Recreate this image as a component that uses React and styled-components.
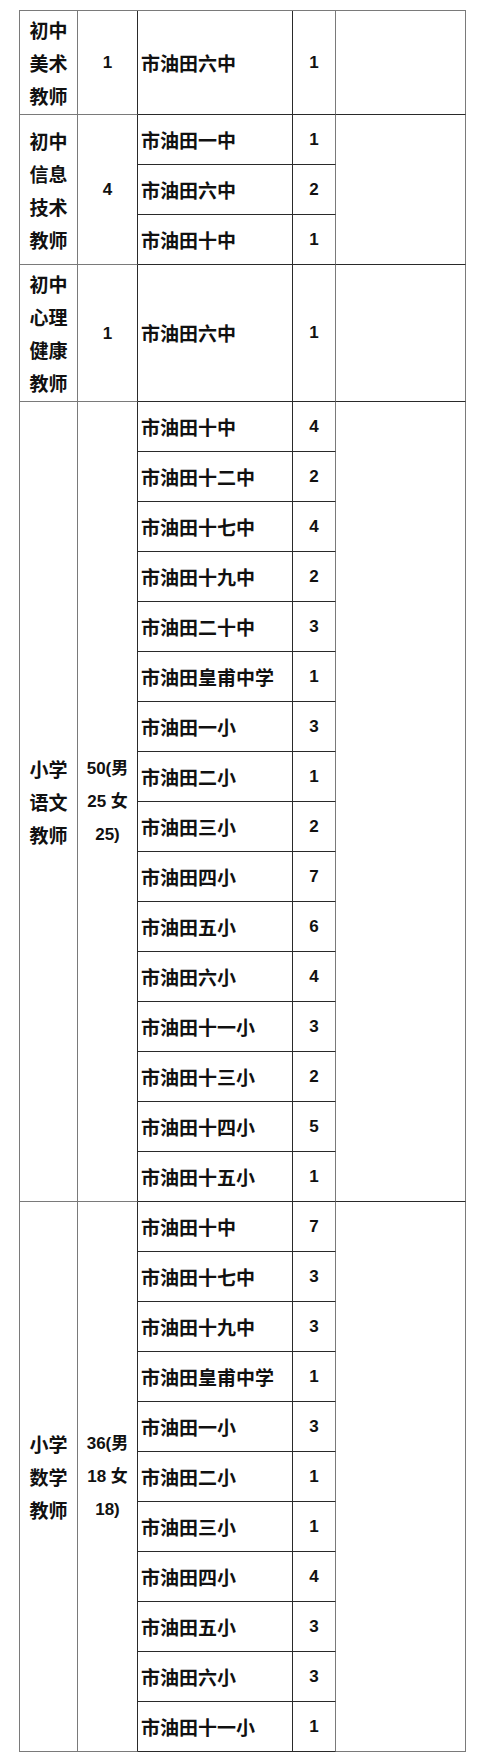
import React from 'react';
import styled, { createGlobalStyle } from 'styled-components';

const GlobalStyle = createGlobalStyle`
  html, body {
    margin: 0;
    padding: 0;
    background: #ffffff;
  }
  body {
    font-family: "Liberation Sans", "Noto Sans CJK SC", sans-serif;
    color: #111;
  }
`;

const DARK = '#2a2a2a';
const GRAY = '#7a7a7a';

const Page = styled.div`
  padding: 10px 0 0 19px;
`;

const Table = styled.table`
  border-collapse: separate;
  border-spacing: 0;
  table-layout: fixed;
  width: 446px;
  border-top: 1px solid ${GRAY};
  border-left: 1px solid ${GRAY};
`;

const Row = styled.tr`
  height: 50px;
`;

const Cell = styled.td`
  padding: 2px 0;
  vertical-align: middle;
  border-right: 1px solid ${(p) => (p.$dark ? DARK : GRAY)};
  border-bottom: 1px solid ${(p) => (p.$darkBottom ? DARK : GRAY)};
  font-weight: 700;
`;

const PostCell = styled(Cell)`
  text-align: center;
  font-size: 19px;
  line-height: 33px;
  font-family: "Noto Sans CJK SC", sans-serif;
`;

const QuotaCell = styled(Cell)`
  text-align: center;
  font-size: 17px;
  font-weight: ${(p) => (p.$split ? 600 : 700)};
  line-height: 33px;
`;

const SchoolCell = styled(Cell)`
  padding-left: 3px;
  font-size: 19px;
  line-height: 24px;
  font-family: "Noto Sans CJK SC", sans-serif;
  white-space: nowrap;
`;

const CountCell = styled(Cell)`
  text-align: center;
  font-size: 17px;
`;

const Line = styled.span`
  display: block;
`;

const groups = [
  {
    post: ['初中', '美术', '教师'],
    quota: ['1'],
    schools: [['市油田六中', 1]],
  },
  {
    post: ['初中', '信息', '技术', '教师'],
    quota: ['4'],
    schools: [
      ['市油田一中', 1],
      ['市油田六中', 2],
      ['市油田十中', 1],
    ],
  },
  {
    post: ['初中', '心理', '健康', '教师'],
    quota: ['1'],
    schools: [['市油田六中', 1]],
  },
  {
    post: ['小学', '语文', '教师'],
    quota: ['50(男', '25 女', '25)'],
    schools: [
      ['市油田十中', 4],
      ['市油田十二中', 2],
      ['市油田十七中', 4],
      ['市油田十九中', 2],
      ['市油田二十中', 3],
      ['市油田皇甫中学', 1],
      ['市油田一小', 3],
      ['市油田二小', 1],
      ['市油田三小', 2],
      ['市油田四小', 7],
      ['市油田五小', 6],
      ['市油田六小', 4],
      ['市油田十一小', 3],
      ['市油田十三小', 2],
      ['市油田十四小', 5],
      ['市油田十五小', 1],
    ],
  },
  {
    post: ['小学', '数学', '教师'],
    quota: ['36(男', '18 女', '18)'],
    schools: [
      ['市油田十中', 7],
      ['市油田十七中', 3],
      ['市油田十九中', 3],
      ['市油田皇甫中学', 1],
      ['市油田一小', 3],
      ['市油田二小', 1],
      ['市油田三小', 1],
      ['市油田四小', 4],
      ['市油田五小', 3],
      ['市油田六小', 3],
      ['市油田十一小', 1],
    ],
  },
];

const App = () => (
  <>
    <GlobalStyle />
    <Page>
      <Table>
        <colgroup>
          <col style={{ width: 58 }} />
          <col style={{ width: 60 }} />
          <col style={{ width: 155 }} />
          <col style={{ width: 43 }} />
          <col style={{ width: 130 }} />
        </colgroup>
        <tbody>
          {groups.map((g, gi) =>
            g.schools.map(([name, count], si) => (
              <Row key={`${gi}-${si}`}>
                {si === 0 && (
                  <>
                    <PostCell rowSpan={g.schools.length}>
                      {g.post.map((t) => (
                        <Line key={t}>{t}</Line>
                      ))}
                    </PostCell>
                    <QuotaCell rowSpan={g.schools.length} $dark $split={g.quota.length > 1}>
                      {g.quota.map((t) => (
                        <Line key={t}>{t}</Line>
                      ))}
                    </QuotaCell>
                  </>
                )}
                <SchoolCell $dark $darkBottom>
                  {name}
                </SchoolCell>
                <CountCell $darkBottom>{count}</CountCell>
                {si === 0 && <Cell rowSpan={g.schools.length} $darkBottom={gi < groups.length - 1} />}
              </Row>
            ))
          )}
        </tbody>
      </Table>
    </Page>
  </>
);

export default App;
